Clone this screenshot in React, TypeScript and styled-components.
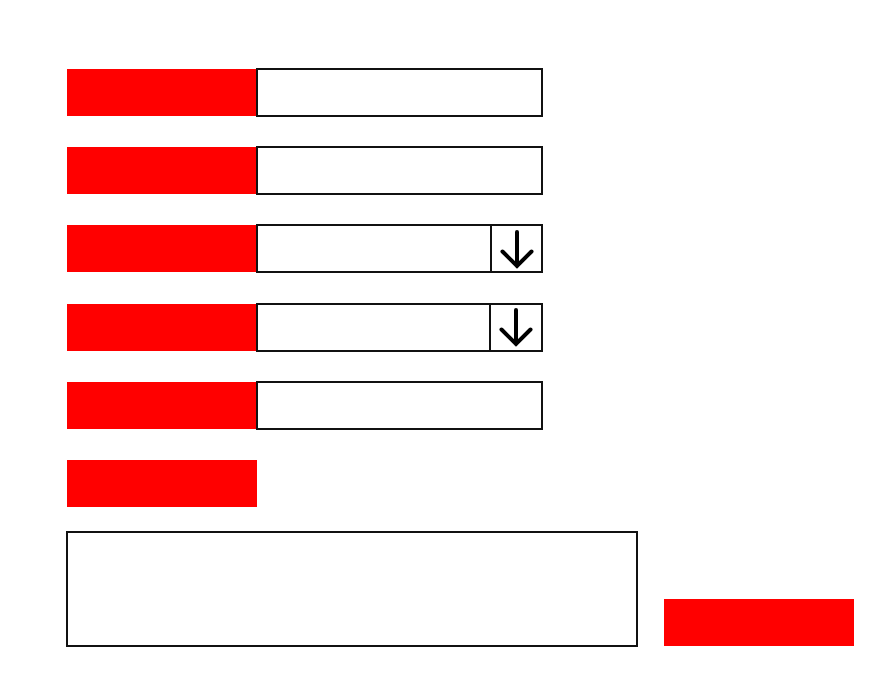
import React from "react";
import styled, { createGlobalStyle } from "styled-components";

const GlobalStyle = createGlobalStyle`
  html, body {
    margin: 0;
    padding: 0;
    background: #ffffff;
    font-family: "Liberation Sans", Arial, sans-serif;
  }
`;

const Page = styled.div`
  display: flex;
  flex-direction: column;
  padding: 68px 0 0 66px;
`;

const Fields = styled.div`
  display: flex;
  flex-direction: column;
  gap: 29.2px;
`;

const Row = styled.div`
  display: flex;
  flex-direction: row;
  align-items: center;
  height: 49px;
`;

const Label = styled.span`
  display: block;
  width: 190px;
  height: 47px;
  margin-left: 1px;
  background-color: #ff0000;
`;

const TextInput = styled.input`
  box-sizing: border-box;
  width: 287px;
  height: 49px;
  margin: 0 0 0 -1px;
  padding: 0 8px;
  border: 2px solid #111111;
  border-radius: 0;
  background: #ffffff;
  outline: none;
  font: inherit;
`;

const SelectBox = styled.div`
  box-sizing: border-box;
  display: flex;
  flex-direction: row;
  width: 287px;
  height: 49px;
  margin-left: -1px;
  border: 2px solid #111111;
  background: #ffffff;
`;

const SelectValue = styled.div`
  flex: 1;
`;

const ArrowButton = styled.div<{ $width: number }>`
  box-sizing: border-box;
  display: flex;
  align-items: center;
  justify-content: center;
  width: ${(p) => p.$width}px;
  border-left: 2px solid #111111;
`;

const Bottom = styled.div`
  display: flex;
  flex-direction: row;
  align-items: flex-end;
  gap: 26px;
  margin-top: 23px;
`;

const Notes = styled.textarea`
  box-sizing: border-box;
  width: 572px;
  height: 116px;
  margin: 0;
  padding: 8px;
  border: 2px solid #111111;
  border-radius: 0;
  resize: none;
  outline: none;
  font: inherit;
`;

const Submit = styled.button`
  width: 190px;
  height: 47px;
  margin: 0 0 1px 0;
  padding: 0;
  border: none;
  border-radius: 0;
  background-color: #ff0000;
  cursor: pointer;
`;

const DownArrow: React.FC = () => (
  <svg width="36" height="40" viewBox="0 0 36 40" fill="none">
    <path
      d="M18 3v34M3.5 22.5 18 37l14.5-14.5"
      stroke="#000000"
      strokeWidth="4"
      strokeLinecap="round"
      strokeLinejoin="miter"
    />
  </svg>
);

const Select: React.FC<{ arrowWidth: number }> = ({ arrowWidth }) => (
  <SelectBox>
    <SelectValue />
    <ArrowButton $width={arrowWidth}>
      <DownArrow />
    </ArrowButton>
  </SelectBox>
);

const App: React.FC = () => (
  <>
    <GlobalStyle />
    <Page>
      <Fields>
        <Row>
          <Label />
          <TextInput type="text" />
        </Row>
        <Row>
          <Label />
          <TextInput type="text" />
        </Row>
        <Row>
          <Label />
          <Select arrowWidth={51} />
        </Row>
        <Row>
          <Label />
          <Select arrowWidth={52} />
        </Row>
        <Row>
          <Label />
          <TextInput type="text" />
        </Row>
        <Row>
          <Label />
        </Row>
      </Fields>
      <Bottom>
        <Notes />
        <Submit type="button" />
      </Bottom>
    </Page>
  </>
);

export default App;
